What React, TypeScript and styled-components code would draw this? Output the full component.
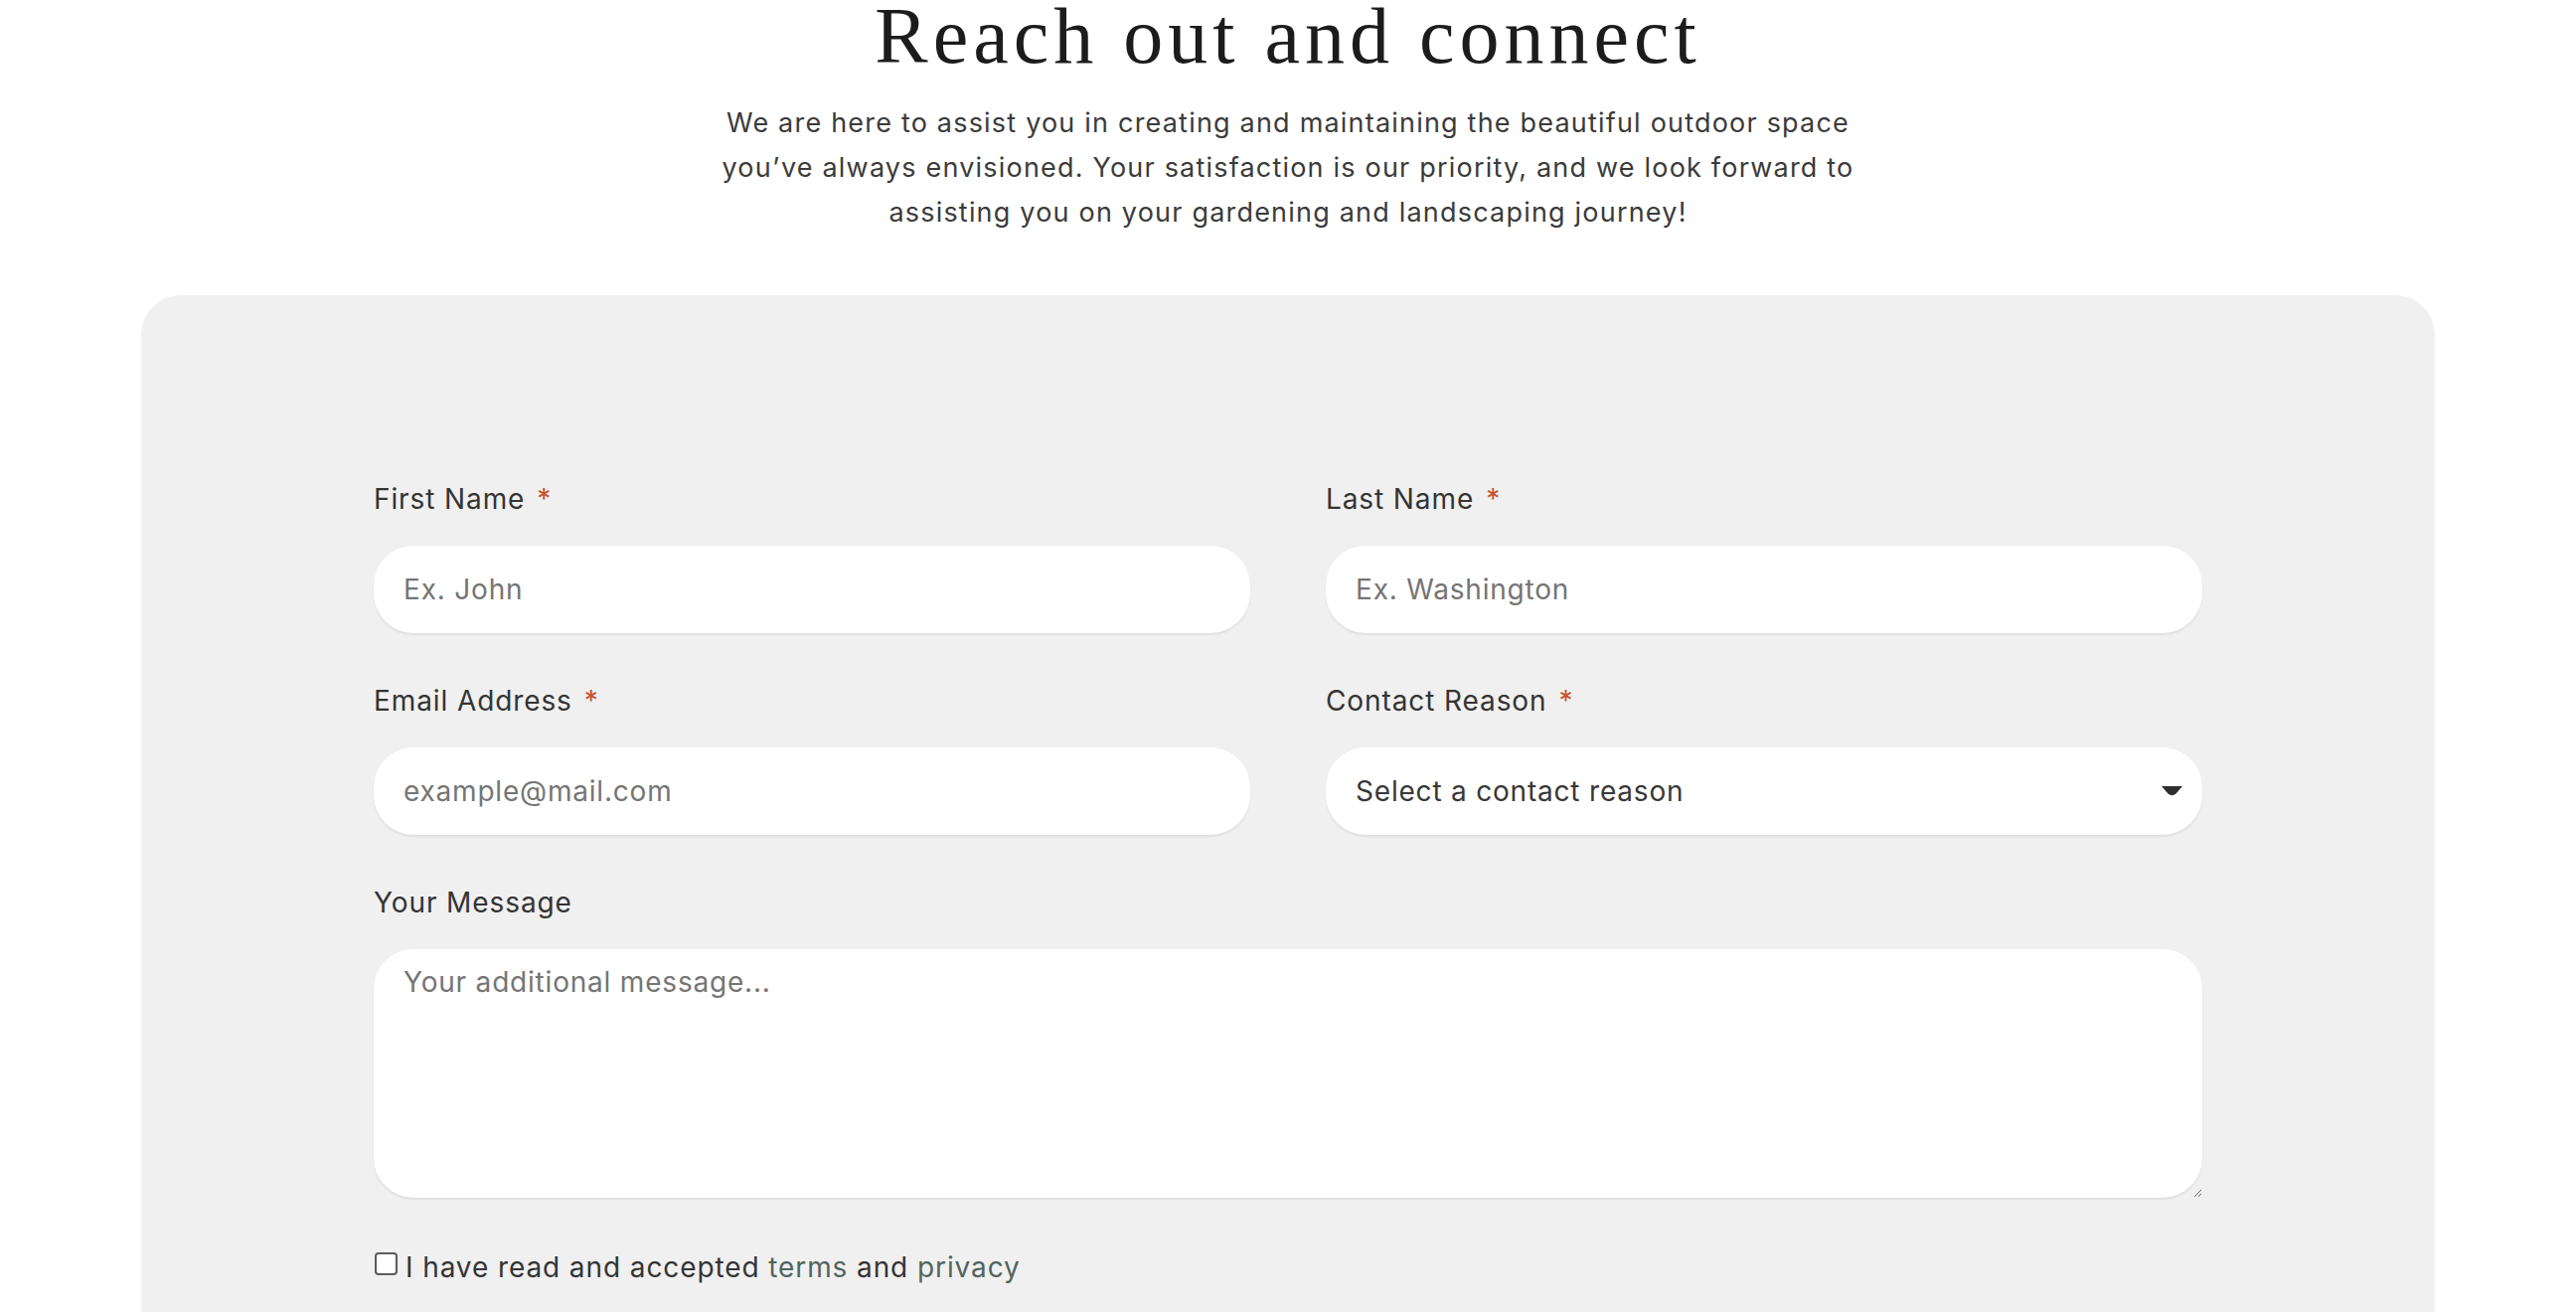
import React from 'react';
import styled, { createGlobalStyle } from 'styled-components';

const GlobalStyle = createGlobalStyle`
    html, body {
        margin: 0;
        padding: 0;
        background: #ffffff;
    }

    body {
        font-family: Inter, Roboto, "Noto Sans", sans-serif;
        color: #333333;
    }
`;

const Page = styled.div`
    height: 1320px;
    overflow: hidden;
    display: flex;
    flex-direction: column;
    align-items: center;
`;

const Title = styled.h1`
    margin: 0;
    font-family: "Liberation Serif", "Times New Roman", serif;
    font-weight: 400;
    font-size: 80px;
    line-height: 0.9;
    letter-spacing: 5px;
    color: #1c1c1c;
`;

const Intro = styled.p`
    margin: 29px 0 0;
    max-width: 1170px;
    text-align: center;
    font-size: 27px;
    line-height: 45px;
    letter-spacing: 1.2px;
    color: #3b3b3b;
`;

const Card = styled.section`
    align-self: stretch;
    margin: 61px 142px 0;
    padding: 188px 234px 200px;
    background: #f0f0f0;
    border-radius: 40px;
`;

const FormGrid = styled.form`
    display: grid;
    grid-template-columns: 1fr 1fr;
    column-gap: 76px;
    row-gap: 51px;
`;

interface FieldProps {
    wide?: boolean;
}

const Field = styled.div<FieldProps>`
    display: flex;
    flex-direction: column;
    gap: 30px;
    grid-column: ${({ wide }) => (wide ? '1 / span 2' : 'auto')};
`;

const Label = styled.label`
    font-size: 28px;
    line-height: 34px;
    letter-spacing: 0.9px;
    color: #343434;
`;

const Required = styled.span`
    margin-left: 12px;
    color: #c9502c;
`;

const fieldBox = `
    box-sizing: border-box;
    width: 100%;
    border: none;
    outline: none;
    background: #ffffff;
    border-radius: 40px;
    box-shadow: 0 2px 2px rgba(0, 0, 0, 0.07);
    font-family: Inter, Roboto, sans-serif;
    font-size: 28px;
    letter-spacing: 0.8px;
    color: #333333;

    ::placeholder {
        color: #8c8c8c;
    }
`;

const TextInput = styled.input`
    ${fieldBox}
    height: 88px;
    padding: 0 30px;
`;

const SelectBox = styled.div`
    ${fieldBox}
    height: 88px;
    padding: 0 20px 0 30px;
    display: flex;
    align-items: center;
    justify-content: space-between;
    color: #383838;
`;

const Caret = styled.svg`
    width: 21px;
    height: 10px;
`;

const MessageArea = styled.textarea`
    ${fieldBox}
    height: 250px;
    padding: 12px 30px;
    line-height: 42px;
    resize: vertical;
`;

const ConsentRow = styled.label`
    display: flex;
    align-items: center;
    gap: 8px;
    margin-top: 53px;
    font-size: 28px;
    line-height: 34px;
    letter-spacing: 0.9px;
    color: #343434;
`;

const Checkbox = styled.input`
    appearance: none;
    margin: -7px 0 0 1px;
    width: 23px;
    height: 23px;
    border: 2px solid #5c5c5c;
    border-radius: 4px;
    background: #ffffff;
`;

const TextLink = styled.a`
    color: #52645f;
    text-decoration: none;
`;

const App = () => {
    return (
        <Page>
            <GlobalStyle />
            <Title>Reach out and connect</Title>
            <Intro>
                We are here to assist you in creating and maintaining the beautiful outdoor space
                you’ve always envisioned. Your satisfaction is our priority, and we look forward to
                assisting you on your gardening and landscaping journey!
            </Intro>
            <Card>
                <FormGrid>
                    <Field>
                        <Label>First Name<Required>*</Required></Label>
                        <TextInput placeholder="Ex. John" />
                    </Field>
                    <Field>
                        <Label>Last Name<Required>*</Required></Label>
                        <TextInput placeholder="Ex. Washington" />
                    </Field>
                    <Field>
                        <Label>Email Address<Required>*</Required></Label>
                        <TextInput placeholder="example@mail.com" />
                    </Field>
                    <Field>
                        <Label>Contact Reason<Required>*</Required></Label>
                        <SelectBox>
                            <span>Select a contact reason</span>
                            <Caret viewBox="0 0 21 10">
                                <path d="M0 0 H21 L14.5 7.6 Q10.5 11 6.5 7.6 Z" fill="#2e2e2e" />
                            </Caret>
                        </SelectBox>
                    </Field>
                    <Field wide>
                        <Label>Your Message</Label>
                        <MessageArea placeholder="Your additional message..." />
                    </Field>
                </FormGrid>
                <ConsentRow>
                    <Checkbox type="checkbox" />
                    <span>
                        I have read and accepted <TextLink href="#">terms</TextLink> and{' '}
                        <TextLink href="#">privacy</TextLink>
                    </span>
                </ConsentRow>
            </Card>
        </Page>
    );
};

export default App;
